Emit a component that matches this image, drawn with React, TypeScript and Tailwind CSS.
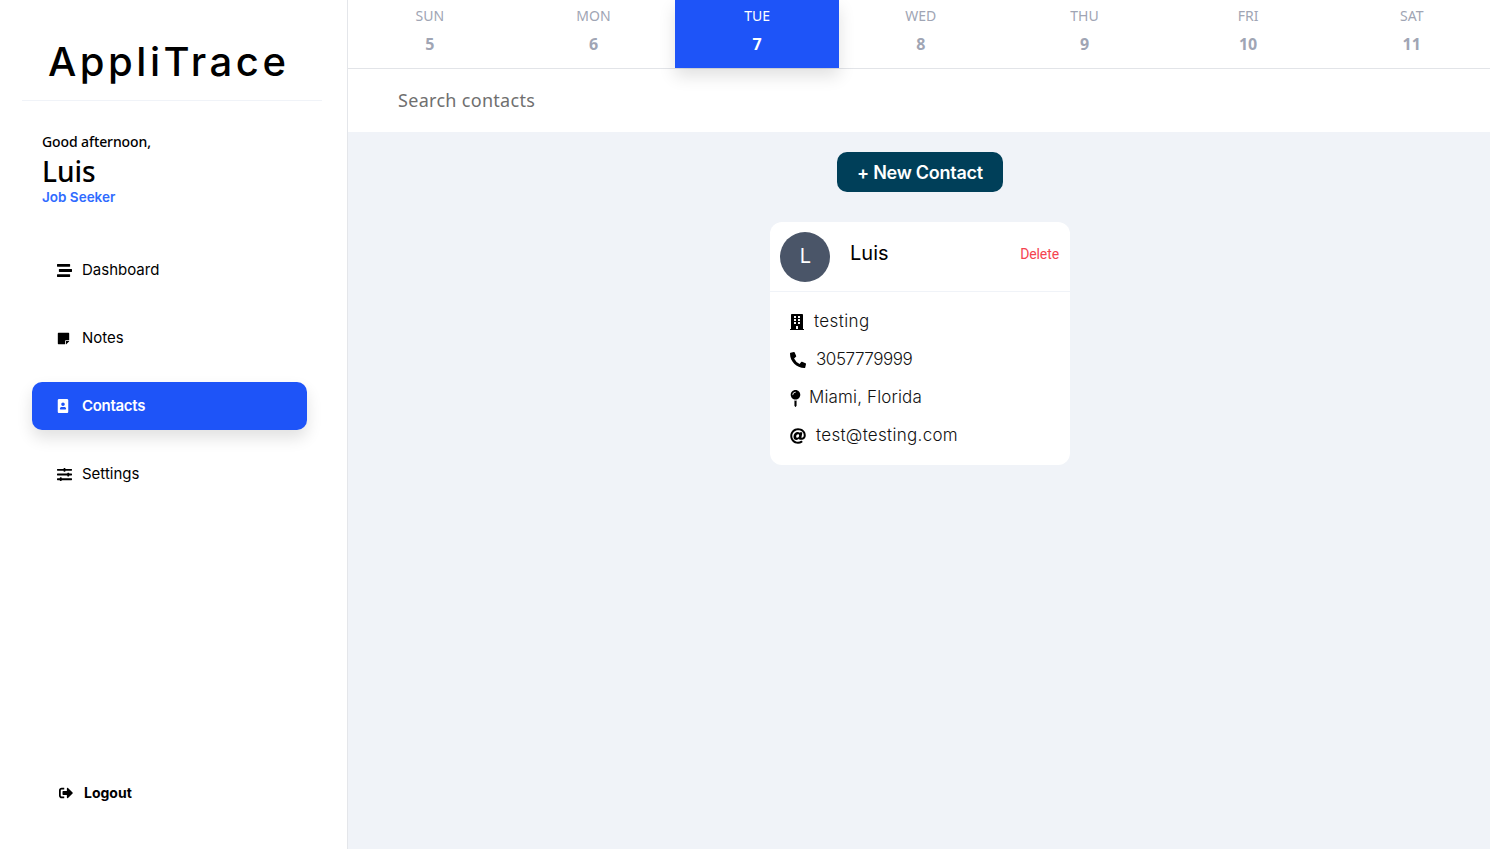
import React from 'react';
import { FaStream, FaStickyNote, FaPortrait, FaSlidersH, FaSignOutAlt, FaBuilding, FaPhoneAlt, FaMapPin, FaAt } from 'react-icons/fa';

const DAYS = [
  { name: 'SUN', num: 5 },
  { name: 'MON', num: 6 },
  { name: 'TUE', num: 7, active: true },
  { name: 'WED', num: 8 },
  { name: 'THU', num: 9 },
  { name: 'FRI', num: 10 },
  { name: 'SAT', num: 11 },
];

const NAV = [
  { label: 'Dashboard', icon: <FaStream size={15} /> },
  { label: 'Notes', icon: <FaStickyNote size={13} /> },
  { label: 'Contacts', icon: <FaPortrait size={14} />, active: true },
  { label: 'Settings', icon: <FaSlidersH size={15} /> },
];

const App: React.FC = () => {
  return (
    <div className="flex h-[849px] w-[1490px] overflow-hidden bg-white font-['Inter',sans-serif] text-black">
      {/* Sidebar */}
      <aside className="flex w-[348px] shrink-0 flex-col border-r border-[#e4e6ea] bg-white">
        <div className="mr-[25px] ml-[22px] flex h-[101px] items-end border-b border-[#f0f3f8] pb-[14px] pl-[26px]">
          <h1 className="text-[40px] leading-[48px] font-medium tracking-[3.5px]">AppliTrace</h1>
        </div>
        <div className="mt-[31px] pl-[42px]">
          <p className="font-['Noto_Sans',sans-serif] text-[14px] leading-[20px] font-medium tracking-[-0.1px]">Good afternoon,</p>
          <p className="mt-[3px] font-['Noto_Sans',sans-serif] text-[28px] leading-[32px] font-medium">Luis</p>
          <p className="mt-[2px] text-[13.5px] leading-[16px] font-semibold text-[#2f6bff]">Job Seeker</p>
        </div>
        <nav className="mt-[41px] flex flex-col gap-[20px] pl-[32px]">
          {NAV.map((item) =>
            item.active ? (
              <div
                key={item.label}
                className="flex h-[48px] w-[275px] items-center rounded-[10px] bg-[#1e54f8] pl-[24px] text-white shadow-[0_8px_16px_rgba(0,0,0,0.12)]"
              >
                <span className="flex w-[26px] items-center">{item.icon}</span>
                <span className="text-[15px] font-semibold tracking-[-0.3px]">{item.label}</span>
              </div>
            ) : (
              <div key={item.label} className="flex h-[48px] w-[275px] items-center pl-[25px]">
                <span className="flex w-[25px] items-center">{item.icon}</span>
                <span className="text-[15px] font-normal">{item.label}</span>
              </div>
            ),
          )}
        </nav>
        <div className="mt-auto mb-[46px] flex items-center pl-[59px]">
          <FaSignOutAlt size={14} />
          <span className="ml-[11px] text-[14px] font-bold">Logout</span>
        </div>
      </aside>

      {/* Main */}
      <main className="flex min-w-0 flex-1 flex-col overflow-hidden bg-[#f0f3f8]">
        <div className="relative z-10 flex h-[69px] shrink-0 border-b border-[#e2e4e8] bg-white">
          {DAYS.map((d) => (
            <div
              key={d.name}
              className={`flex h-[68px] w-[163.67px] shrink-0 flex-col items-center pt-[8px] ${
                d.active ? 'bg-[#1e54f8] text-white shadow-[0_8px_16px_rgba(0,0,0,0.12)]' : 'text-[#a0a5b4]'
              }`}
            >
              <span className="font-['Noto_Sans',sans-serif] text-[14px] leading-[16px]">{d.name}</span>
              <span className="mt-[10px] font-['Noto_Sans',sans-serif] text-[16px] leading-[20px] font-bold">{d.num}</span>
            </div>
          ))}
        </div>

        <div className="flex h-[63px] shrink-0 items-center bg-white pl-[50px]">
          <span className="font-['Noto_Sans',sans-serif] text-[18px] tracking-[0.3px] text-[#6f6f6f]">Search contacts</span>
        </div>

        <div className="flex flex-1 flex-col items-center pt-[20px] pl-[2px]">
          <button className="flex h-[40px] w-[166px] items-center justify-center rounded-[10px] bg-[#003f59] text-[18px] font-semibold tracking-[-0.25px] text-white">
            + New Contact
          </button>

          <div className="mt-[30px] w-[300px] rounded-[12px] bg-white">
            <div className="flex h-[70px] items-start border-b border-[#f0f3f8] pt-[10px] pl-[10px]">
              <div className="flex h-[50px] w-[50px] items-center justify-center rounded-full bg-[#4a5568] pb-[2px] pl-[1px] text-[20px] text-white">L</div>
              <span className="mt-[6px] ml-[20px] text-[20px] leading-[30px]">Luis</span>
              <span className="mt-[13px] mr-[11px] ml-auto font-['Roboto',sans-serif] text-[14px] leading-[18px] tracking-[-0.1px] text-[#f5434f]">Delete</span>
            </div>
            <div className="flex flex-col gap-[14px] pt-[18px] pb-[17px] pl-[20px]">
              <div className="flex h-[24px] items-center text-[#111]">
                <FaBuilding size={16} className="-ml-[1px] text-black" />
                <span className="ml-[9px] text-[17px] font-light tracking-[0.4px]">testing</span>
              </div>
              <div className="flex h-[24px] items-center text-[#111]">
                <FaPhoneAlt size={16} className="text-black" />
                <span className="ml-[10px] text-[17px] font-light tracking-[-0.45px]">3057779999</span>
              </div>
              <div className="flex h-[24px] items-center text-[#111]">
                <FaMapPin size={17} className="-ml-[3px] text-black" />
                <span className="ml-[5px] text-[17px] font-light tracking-[0.15px]">Miami, Florida</span>
              </div>
              <div className="flex h-[24px] items-center text-[#111]">
                <FaAt size={16} className="text-black" />
                <span className="ml-[10px] text-[17px] font-light tracking-[0.3px]">test@testing.com</span>
              </div>
            </div>
          </div>
        </div>
      </main>
    </div>
  );
};

export default App;
